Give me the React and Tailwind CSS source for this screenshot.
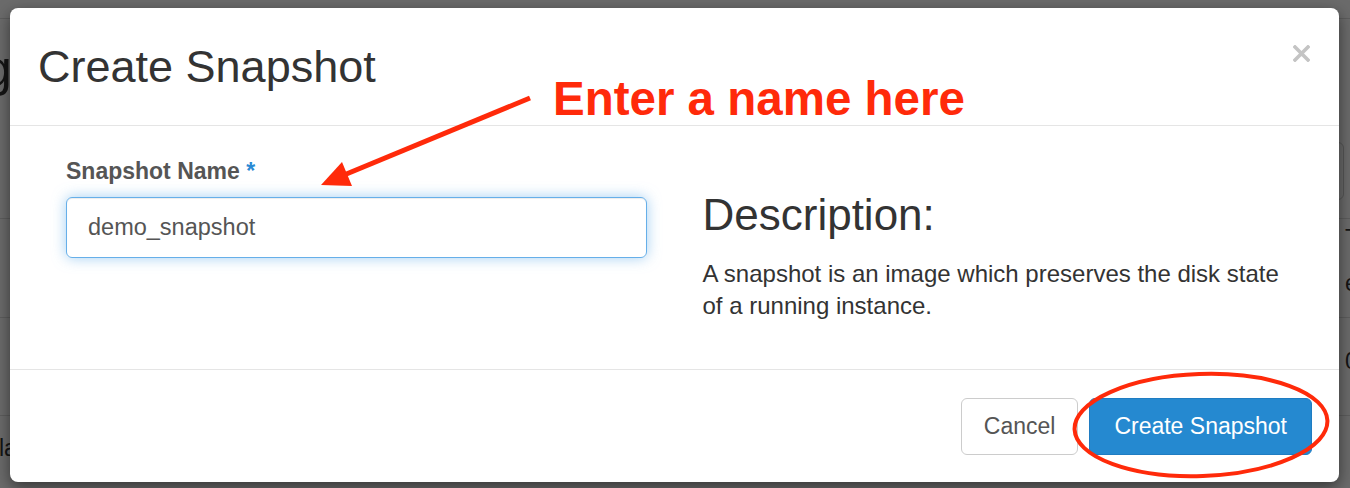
import React from "react";

const red = "#ff2a0a";

const PageBehind = () => {
  return (
    <div className="flex flex-col bg-white text-[#333]">
      <div className="h-[19px] border-b border-[#dddddd]" />
      <div className="h-[200px] border-b border-[#dddddd] flex flex-col">
        <div className="mt-[25px] -ml-[16px] text-[50px] leading-none">g</div>
        <div className="mt-[48px] flex justify-end pr-[6px]">
          <div className="h-[58px] w-[120px] rounded-[6px] border border-[#cccccc]" />
        </div>
      </div>
      <div className="h-[99px] border-b border-[#dddddd] flex justify-end">
        <div className="w-[5px] flex flex-col text-[23px] leading-none whitespace-nowrap">
          <span className="mt-[8px]">Type</span>
          <span className="mt-[22px]">en</span>
        </div>
      </div>
      <div className="h-[98px] border-b border-[#dddddd] flex justify-end">
        <div className="w-[5px] text-[23px] leading-none whitespace-nowrap mt-[32px]">0</div>
      </div>
      <div className="h-[72px] flex">
        <div className="-ml-[1px] mt-[21px] text-[23px] leading-none">la</div>
      </div>
    </div>
  );
};

const CloseIcon = () => (
  <svg width="17" height="17" viewBox="0 0 17 17" className="block">
    <path d="M2 2 L15 15 M15 2 L2 15" stroke="#c4c4c4" strokeWidth="3.6" strokeLinecap="square" />
  </svg>
);

const Modal = () => {
  return (
    <div className="w-[1329px] h-[474px] rounded-lg bg-white shadow-[0_5px_15px_rgba(0,0,0,0.5)] flex flex-col">
      <div className="h-[118px] border-b border-[#e5e5e5] px-[28px] flex items-center justify-between">
        <h3 className="text-[45px] leading-none text-[#333]">Create Snapshot</h3>
        <button className="self-start mt-[37px] mr-[1px]">
          <CloseIcon />
        </button>
      </div>

      <div className="h-[243px] grid grid-cols-2 px-[28px]">
        <div className="px-[28px] pt-[34px]">
          <label className="block text-[23px] leading-none font-bold text-[#555]">
            Snapshot Name <span className="text-[#2a8ad4]">*</span>
          </label>
          <input
            readOnly
            value="demo_snapshot"
            className="mt-[14px] block w-full h-[61px] rounded-[6px] border border-[#66afe9] px-[21px] text-[23.5px] text-[#555] outline-none shadow-[inset_0_1px_1px_rgba(0,0,0,0.075),0_0_14px_rgba(102,175,233,0.6)]"
          />
        </div>
        <div className="px-[28px] pt-[67px]">
          <h3 className="text-[44px] leading-none text-[#333]">Description:</h3>
          <p className="mt-[21px] text-[24px] leading-[32px] text-[#333]">
            A snapshot is an image which preserves the disk state of a running instance.
          </p>
        </div>
      </div>

      <div className="h-[113px] border-t border-[#e5e5e5] flex items-center justify-end gap-[11px] pr-[27px]">
        <button className="h-[57px] px-[22px] rounded-[6px] border border-[#cccccc] bg-white text-[23px] text-[#555]">
          Cancel
        </button>
        <button className="h-[57px] px-[24px] rounded-[6px] border border-[#1f7cc2] bg-[#2589d0] text-[23px] text-white">
          Create Snapshot
        </button>
      </div>
    </div>
  );
};

const Annotations = () => (
  <div className="absolute inset-0 pointer-events-none">
    <svg width="1350" height="488" className="absolute inset-0">
      <line x1="530" y1="98" x2="344" y2="175" stroke={red} strokeWidth="5" />
      <polygon points="321,185 342,162 352,186" fill={red} />
      <ellipse
        cx="1201"
        cy="425"
        rx="126.5"
        ry="51"
        fill="none"
        stroke={red}
        strokeWidth="4"
        transform="rotate(-2 1201 425)"
      />
    </svg>
    <div className="absolute left-[553px] top-[75px] text-[47.5px] leading-none font-bold text-[#ff2a0a] whitespace-nowrap">
      Enter a name here
    </div>
  </div>
);

export default function App() {
  return (
    <div className="relative w-[1350px] h-[488px] overflow-hidden font-['Liberation_Sans',Arial,sans-serif]">
      <PageBehind />
      <div className="absolute inset-0 bg-black/[0.58]" />
      <div className="absolute inset-0 pl-[10px] pt-[8px]">
        <Modal />
      </div>
      <Annotations />
    </div>
  );
}
